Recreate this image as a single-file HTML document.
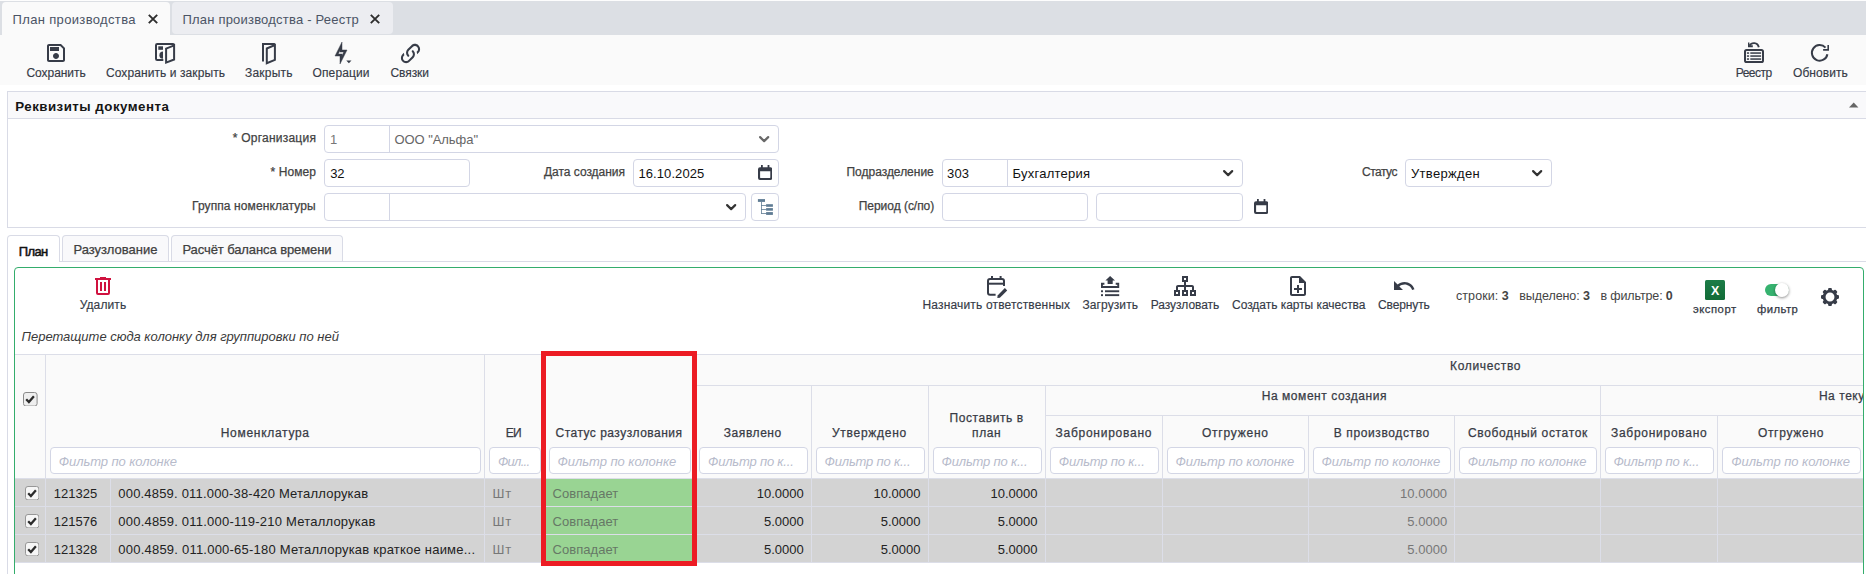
<!DOCTYPE html>
<html lang="ru"><head><meta charset="utf-8"><title>План производства</title><style>
html,body{margin:0;padding:0}
body{width:1866px;height:574px;overflow:hidden;background:#fff;position:relative;font-family:"Liberation Sans",sans-serif;font-size:13px;color:#333}
.b,.i,.t{position:absolute;box-sizing:border-box}
.t{white-space:pre;line-height:16px;display:block}
.tabbar{position:absolute;left:0;top:0;width:1866px;height:35px;background:#dcdfe4}
.toolbar{position:absolute;left:0;top:35px;width:1866px;height:50px;background:#fafafa}
.grid{overflow:hidden}
b{font-weight:700}
.sb{-webkit-text-stroke:.25px}
.sb2{-webkit-text-stroke:.5px}
.lb{-webkit-text-stroke:.15px}
</style></head><body>
<div class="tabbar">
<div class="b" style="left:0px;top:0px;width:1866px;height:1px;background:#fdfdfd"></div>
<div class="b" style="left:2px;top:2px;width:168px;height:33px;background:#fafafa;border-radius:4px 4px 0 0"></div>
<div class="b" style="left:172px;top:2px;width:221px;height:32px;background:#ecedf1;border-radius:4px"></div>
<span class="t" style="left:12.50px;top:11.50px;color:#4b5465;letter-spacing:0.350px;">План производства</span>
<svg class="i" style="left:147px;top:13.2px" width="12" height="12" viewBox="0 0 12 12" ><path d="M1.8 1.8L10.2 10.2M10.2 1.8L1.8 10.2" fill="none" stroke="#2e2e2e" stroke-width="1.9"/></svg>
<span class="t" style="left:182.40px;top:11.50px;color:#4b5465;letter-spacing:0.208px;">План производства - Реестр</span>
<svg class="i" style="left:369.4px;top:13.2px" width="12" height="12" viewBox="0 0 12 12" ><path d="M1.8 1.8L10.2 10.2M10.2 1.8L1.8 10.2" fill="none" stroke="#2e2e2e" stroke-width="1.9"/></svg>
</div>
<div class="toolbar">
<svg class="i" style="left:44px;top:6px" width="24" height="24" viewBox="0 0 24 24" ><path fill="#373c48" d="M17 3H5C3.89 3 3 3.9 3 5V19C3 20.1 3.89 21 5 21H19C20.1 21 21 20.1 21 19V7L17 3M19 19H5V5H16.17L19 7.83V19M12 12C10.34 12 9 13.34 9 15S10.34 18 12 18 15 16.66 15 15 13.66 12 12 12M6 6H15V10H6V6Z"/></svg>
<span class="t lb" style="left:26.50px;top:29.84px;font-size:12px;color:#363b47;letter-spacing:-0.055px;">Сохранить</span>
<svg class="i" style="left:155px;top:8px" width="21" height="22" viewBox="0 0 21 22" ><g fill="none" stroke="#373c48" stroke-width="2"><path d="M8.3 16.9H2.2A1.2 1.2 0 0 1 1 15.7V2.2A1.2 1.2 0 0 1 2.2 1H18A1.1 1.1 0 0 1 19.1 2.1"/><path d="M11.1 5.7L19.1 2.4V16.5L11.1 19.6Z" stroke-linejoin="miter"/></g><rect x="3.3" y="3.3" width="4.7" height="3.5" fill="#373c48"/><path d="M8 8.6A3.6 3.6 0 0 0 8 15.8Z" fill="#373c48"/></svg>
<span class="t lb" style="left:106.00px;top:29.84px;font-size:12px;color:#363b47;letter-spacing:0.084px;">Сохранить и закрыть</span>
<svg class="i" style="left:261px;top:7px" width="17" height="23" viewBox="0 0 17 23" ><g fill="none" stroke="#373c48" stroke-width="2"><path d="M2 19.4V2H13.9"/><path d="M5.8 6.5L13.9 3.1V17.9L5.8 21.2Z"/></g></svg>
<span class="t lb" style="left:245.00px;top:29.84px;font-size:12px;color:#363b47;letter-spacing:0.197px;">Закрыть</span>
<svg class="i" style="left:329px;top:6px" width="24" height="24" viewBox="0 0 24 24" ><path fill="#373c48" stroke="#373c48" stroke-width=".45" d="M11 9.47V11H14.76L13 14.53V13H9.24L11 9.47M13 1L6 15H11V23L18 9H13V1Z"/></svg>
<svg class="i" style="left:345.5px;top:24.8px" width="6" height="4" viewBox="0 0 6 4" ><path d="M.3 .4H5.5L2.9 3.2Z" fill="#373c48"/></svg>
<span class="t lb" style="left:312.60px;top:29.84px;font-size:12px;color:#363b47;letter-spacing:0.094px;">Операции</span>
<svg class="i" style="left:397.9px;top:5.9px" width="25" height="25" viewBox="0 0 24 24" ><path fill="#373c48" d="M10.59,13.41C11,13.8 11,14.44 10.59,14.83C10.2,15.22 9.56,15.22 9.17,14.83C7.22,12.88 7.22,9.71 9.17,7.76V7.76L12.71,4.22C14.66,2.27 17.83,2.27 19.78,4.22C21.73,6.17 21.73,9.34 19.78,11.29L18.29,12.78C18.3,11.96 18.17,11.14 17.89,10.36L18.36,9.88C19.54,8.71 19.54,6.81 18.36,5.64C17.19,4.46 15.29,4.46 14.12,5.64L10.59,9.17C9.41,10.34 9.41,12.24 10.59,13.41M13.41,9.17C13.8,8.78 14.44,8.78 14.83,9.17C16.78,11.12 16.78,14.29 14.83,16.24V16.24L11.29,19.78C9.34,21.73 6.17,21.73 4.22,19.78C2.27,17.83 2.27,14.66 4.22,12.71L5.71,11.22C5.7,12.04 5.83,12.86 6.11,13.65L5.64,14.12C4.46,15.29 4.46,17.19 5.64,18.36C6.81,19.54 8.71,19.54 9.88,18.36L13.41,14.83C14.59,13.66 14.59,11.76 13.41,10.59C13,10.2 13,9.56 13.41,9.17Z"/></svg>
<span class="t lb" style="left:390.50px;top:29.84px;font-size:12px;color:#363b47;letter-spacing:-0.072px;">Связки</span>
<svg class="i" style="left:1743px;top:6px" width="22" height="23" viewBox="0 0 22 23" ><rect x="2" y="9" width="18" height="12" rx="1.6" fill="none" stroke="#373c48" stroke-width="2"/><g fill="#373c48"><rect x="3.9" y="11.3" width="2.2" height="1.5"/><rect x="7.3" y="11.3" width="10.8" height="1.5"/><rect x="3.9" y="14.3" width="2.2" height="1.5"/><rect x="7.3" y="14.3" width="10.8" height="1.5"/><rect x="3.9" y="17.3" width="2.2" height="1.5"/><rect x="7.3" y="17.3" width="10.8" height="1.5"/><path d="M5 1.5H6.4V4.3H9.8V6.2H5Z"/></g><path d="M6.5 4.6C8.5 1.2 14.5 .9 15.8 6.2" fill="none" stroke="#373c48" stroke-width="1.9"/></svg>
<span class="t lb" style="left:1735.70px;top:29.84px;font-size:12px;color:#363b47;letter-spacing:-0.500px;">Реестр</span>
<svg class="i" style="left:1809px;top:7px" width="22" height="22" viewBox="0 0 22 22" ><path d="M16.5 5.68A7.8 7.8 0 1 0 18.38 12.25" fill="none" stroke="#373c48" stroke-width="2"/><path d="M18.4 3.1H20V8.7H14.1V6.9H18.4Z" fill="#373c48"/></svg>
<span class="t lb" style="left:1793.00px;top:29.84px;font-size:12px;color:#363b47;letter-spacing:0.065px;">Обновить</span>
</div>
<div class="b" style="left:7px;top:91px;width:1870px;height:137px;border:1px solid #d9dbe6;background:#fff"></div>
<div class="b" style="left:8px;top:92px;width:1868px;height:27px;background:#f9f9fb;border-bottom:1px solid #d9dbe6"></div>
<span class="t" style="left:15.30px;top:98.69px;font-size:13.3px;font-weight:700;color:#151515;letter-spacing:0.478px;">Реквизиты документа</span>
<svg class="i" style="left:1849px;top:101.5px" width="10" height="6" viewBox="0 0 10 6" ><path d="M0 5.5L4.7 .6L9.4 5.5Z" fill="#666"/></svg>
<span class="t sb" style="left:232.70px;top:130.14px;font-size:12px;color:#424242;letter-spacing:0.234px;">* Организация</span>
<div class="b" style="left:324px;top:125px;width:455px;height:28px;border:1px solid #d3d6e5;border-radius:4px;background:#fff;"></div>
<div class="b" style="left:389px;top:126px;width:1px;height:26px;background:#d3d6e5"></div>
<span class="t" style="left:330.00px;top:131.50px;color:#777;">1</span>
<span class="t" style="left:394.50px;top:131.50px;color:#666;letter-spacing:-0.064px;">ООО "Альфа"</span>
<svg class="i" style="left:758.3px;top:134.5px" width="12.5" height="8.5" viewBox="0 0 12.5 8.5" ><path d="M2.1 2.1 L6.15 6.1 L10.2 2.1" fill="none" stroke="#686868" stroke-width="2.2" stroke-linecap="round" stroke-linejoin="round"/></svg>
<span class="t sb" style="left:270.60px;top:164.04px;font-size:12px;color:#424242;letter-spacing:0.058px;">* Номер</span>
<div class="b" style="left:324px;top:159px;width:146px;height:28px;border:1px solid #d3d6e5;border-radius:4px;background:#fff;"></div>
<span class="t" style="left:330.20px;top:165.50px;color:#111;letter-spacing:-0.269px;">32</span>
<span class="t sb" style="left:544.00px;top:164.24px;font-size:12px;color:#424242;letter-spacing:-0.027px;">Дата создания</span>
<div class="b" style="left:633px;top:159px;width:146px;height:28px;border:1px solid #d3d6e5;border-radius:4px;background:#fff;"></div>
<span class="t" style="left:638.50px;top:165.50px;color:#111;letter-spacing:0.075px;">16.10.2025</span>
<svg class="i" style="left:757.9px;top:165.1px" width="14.4" height="15" viewBox="0 0 14.4 15" ><path fill="#373c48" d="M3 0h1.8v2.3h4.8V0h1.8v2.3h1A2 2 0 0 1 14.4 4.3V13a2 2 0 0 1-2 2H2a2 2 0 0 1-2-2V4.3a2 2 0 0 1 2-2h1zM2.1 6.2v6.3a.4.4 0 0 0 .4.4h9.4a.4.4 0 0 0 .4-.4V6.2z"/></svg>
<span class="t sb" style="left:192.00px;top:198.04px;font-size:12px;color:#424242;letter-spacing:0.099px;">Группа номенклатуры</span>
<div class="b" style="left:324px;top:193px;width:422px;height:28px;border:1px solid #d3d6e5;border-radius:4px;background:#fff;"></div>
<div class="b" style="left:389px;top:194px;width:1px;height:26px;background:#d3d6e5"></div>
<svg class="i" style="left:725px;top:203px" width="12.5" height="8.5" viewBox="0 0 12.5 8.5" ><path d="M2.1 2.1 L6.15 6.1 L10.2 2.1" fill="none" stroke="#333" stroke-width="2.2" stroke-linecap="round" stroke-linejoin="round"/></svg>
<div class="b" style="left:751px;top:193px;width:28px;height:28px;border:1px solid #d3d6e5;border-radius:4px;background:#fff;"></div>
<svg class="i" style="left:757px;top:198px" width="17" height="18" viewBox="0 0 17 18" ><g fill="#5f7c94"><rect x=".9" y="1.1" width="7.1" height="2.8"/><rect x="9.1" y="6.2" width="6.8" height="2.6"/><rect x="9.1" y="10.1" width="6.8" height="2.6"/><rect x="9.1" y="14.1" width="6.8" height="2.8"/><rect x="4" y="3.9" width=".8" height="11.8"/><rect x="4" y="7.1" width="5.2" height=".8"/><rect x="4" y="11" width="5.2" height=".8"/><rect x="4" y="15" width="5.2" height=".8"/></g></svg>
<span class="t sb" style="left:846.50px;top:164.24px;font-size:12px;color:#424242;letter-spacing:-0.017px;">Подразделение</span>
<div class="b" style="left:942px;top:159px;width:301px;height:28px;border:1px solid #d3d6e5;border-radius:4px;background:#fff;"></div>
<div class="b" style="left:1007px;top:160px;width:1px;height:26px;background:#d3d6e5"></div>
<span class="t" style="left:947.00px;top:165.50px;color:#111;letter-spacing:0.148px;">303</span>
<span class="t" style="left:1012.50px;top:165.50px;color:#111;letter-spacing:0.241px;">Бухгалтерия</span>
<svg class="i" style="left:1222.25px;top:169px" width="12.5" height="8.5" viewBox="0 0 12.5 8.5" ><path d="M2.1 2.1 L6.15 6.1 L10.2 2.1" fill="none" stroke="#333" stroke-width="2.2" stroke-linecap="round" stroke-linejoin="round"/></svg>
<span class="t sb" style="left:858.75px;top:198.14px;font-size:12px;color:#424242;letter-spacing:-0.035px;">Период (с/по)</span>
<div class="b" style="left:942px;top:193px;width:146px;height:28px;border:1px solid #d3d6e5;border-radius:4px;background:#fff;"></div>
<div class="b" style="left:1096px;top:193px;width:147px;height:28px;border:1px solid #d3d6e5;border-radius:4px;background:#fff;"></div>
<svg class="i" style="left:1253.8px;top:199.3px" width="14.4" height="15" viewBox="0 0 14.4 15" ><path fill="#373c48" d="M3 0h1.8v2.3h4.8V0h1.8v2.3h1A2 2 0 0 1 14.4 4.3V13a2 2 0 0 1-2 2H2a2 2 0 0 1-2-2V4.3a2 2 0 0 1 2-2h1zM2.1 6.2v6.3a.4.4 0 0 0 .4.4h9.4a.4.4 0 0 0 .4-.4V6.2z"/></svg>
<span class="t sb" style="left:1362.00px;top:164.24px;font-size:12px;color:#424242;letter-spacing:-0.487px;">Статус</span>
<div class="b" style="left:1405px;top:159px;width:147px;height:28px;border:1px solid #d3d6e5;border-radius:4px;background:#fff;"></div>
<span class="t" style="left:1411.00px;top:165.50px;color:#111;letter-spacing:0.328px;">Утвержден</span>
<svg class="i" style="left:1530.75px;top:169px" width="12.5" height="8.5" viewBox="0 0 12.5 8.5" ><path d="M2.1 2.1 L6.15 6.1 L10.2 2.1" fill="none" stroke="#333" stroke-width="2.2" stroke-linecap="round" stroke-linejoin="round"/></svg>
<div class="b" style="left:7px;top:261px;width:1870px;height:1px;background:#d9dbe6"></div>
<div class="b" style="left:7px;top:262px;width:1px;height:320px;background:#d9dbe6"></div>
<div class="b" style="left:7px;top:235px;width:53px;height:27px;border:1px solid #d9dbe6;border-bottom:0;border-radius:4px 4px 0 0;background:#fff"></div>
<div class="b" style="left:62px;top:235px;width:107px;height:26px;border:1px solid #d9dbe6;border-bottom:0;border-radius:4px 4px 0 0;background:#f9f9fb"></div>
<div class="b" style="left:171px;top:235px;width:172px;height:26px;border:1px solid #d9dbe6;border-bottom:0;border-radius:4px 4px 0 0;background:#f9f9fb"></div>
<span class="t sb2" style="left:18.80px;top:243.50px;color:#111;letter-spacing:-0.615px;">План</span>
<span class="t sb" style="left:73.40px;top:242.10px;color:#404040;">Разузлование</span>
<span class="t sb" style="left:182.40px;top:242.10px;color:#404040;letter-spacing:-0.090px;">Расчёт баланса времени</span>
<div class="b" style="left:14px;top:267px;width:1850px;height:330px;border:1px solid #34ad6c;border-radius:4px;background:#fff"></div>
<svg class="i" style="left:90.7px;top:274.2px" width="24" height="24" viewBox="0 0 24 24" ><path fill="#d0123f" d="M9,3V4H4V6H5V19A2,2 0 0,0 7,21H17A2,2 0 0,0 19,19V6H20V4H15V3H9M7,6H17V19H7V6M9,8V17H11V8H9M13,8V17H15V8H13Z"/></svg>
<span class="t lb" style="left:79.70px;top:296.84px;font-size:12px;color:#363b47;letter-spacing:0.112px;">Удалить</span>
<svg class="i" style="left:986px;top:275px" width="23" height="23" viewBox="0 0 23 23" ><g fill="none" stroke="#373c48" stroke-width="2"><path d="M9.6 19.7H4A2 2 0 0 1 2 17.7V6A2 2 0 0 1 4 4H16A2 2 0 0 1 18 6V11"/><path d="M2 8.7H18"/><path d="M6 1V4M14.6 1V4"/></g><path d="M11.6 20.4L18.9 13.1L21.2 15.4L13.9 22.7L11.3 23Z" fill="#373c48"/></svg>
<span class="t lb" style="left:922.50px;top:296.84px;font-size:12px;color:#363b47;letter-spacing:0.165px;">Назначить ответственных</span>
<svg class="i" style="left:1101px;top:276px" width="19" height="21" viewBox="0 0 19 21" ><g fill="#373c48"><path d="M9.1 0L14 4.4H11.7V7.9H6.6V4.4H4.4Z"/><path d="M0 6.8H3.4V8.7H1.9V10H16.3V8.7H14.7V6.8H18.2V11.9H0Z"/><rect x="0" y="14.3" width="2" height="1.9"/><rect x="4" y="14.3" width="14.2" height="1.9"/><rect x="0" y="18.2" width="2" height="1.9"/><rect x="4" y="18.2" width="14.2" height="1.9"/></g></svg>
<span class="t lb" style="left:1082.50px;top:296.84px;font-size:12px;color:#363b47;letter-spacing:0.088px;">Загрузить</span>
<svg class="i" style="left:1173px;top:274px" width="24" height="24" viewBox="0 0 24 24" ><path fill="#373c48" d="M9 2V8H11V11H5C3.89 11 3 11.89 3 13V16H1V22H7V16H5V13H11V16H9V22H15V16H13V13H19V16H17V22H23V16H21V13C21 11.89 20.11 11 19 11H13V8H15V2H9M11 4H13V6H11V4M3 18H5V20H3V18M11 18H13V20H11V18M19 18H21V20H19V18Z"/></svg>
<span class="t lb" style="left:1150.75px;top:296.84px;font-size:12px;color:#363b47;letter-spacing:-0.059px;">Разузловать</span>
<svg class="i" style="left:1286px;top:274px" width="24" height="24" viewBox="0 0 24 24" ><path fill="#373c48" d="M14 2H6C4.89 2 4 2.89 4 4V20C4 21.11 4.89 22 6 22H18C19.11 22 20 21.11 20 20V8L14 2M18 20H6V4H13V9H18V20M13 11V14H16V16H13V19H11V16H8V14H11V11H13ZM13 3.5V9H18.5Z"/></svg>
<span class="t lb" style="left:1232.00px;top:296.84px;font-size:12px;color:#363b47;letter-spacing:-0.036px;">Создать карты качества</span>
<svg class="i" style="left:1391.5px;top:274.2px" width="24" height="24" viewBox="0 0 24 24" ><path fill="#373c48" d="M12.5,8C9.85,8 7.45,9 5.6,10.6L2,7V16H11L7.38,12.38C8.77,11.22 10.54,10.5 12.5,10.5C16.04,10.5 19.05,12.81 20.1,16L22.47,15.22C21.08,11.03 17.15,8 12.5,8Z"/></svg>
<span class="t lb" style="left:1378.00px;top:296.84px;font-size:12px;color:#363b47;letter-spacing:-0.120px;">Свернуть</span>
<span class="t" style="left:1456.00px;top:287.67px;font-size:12.5px;color:#444;letter-spacing:0.071px;">строки: <b>3</b></span>
<span class="t" style="left:1519.30px;top:287.67px;font-size:12.5px;color:#444;letter-spacing:-0.077px;">выделено: <b>3</b></span>
<span class="t" style="left:1600.50px;top:287.67px;font-size:12.5px;color:#444;letter-spacing:-0.132px;">в фильтре: <b>0</b></span>
<div class="b" style="left:1705px;top:280px;width:20px;height:20px;background:linear-gradient(#1c7c47,#126c37);border-radius:1.5px"></div>
<span class="t" style="left:1711.00px;top:282.67px;font-size:12.5px;font-weight:700;color:#fff;letter-spacing:-0.544px;">X</span>
<span class="t sb" style="left:1693.00px;top:301.08px;font-size:11.3px;color:#333844;letter-spacing:0.501px;">экспорт</span>
<div class="b" style="left:1765px;top:284px;width:24px;height:12px;background:linear-gradient(90deg,#36b26f 45%,#9cc9b0);border-radius:6px"></div>
<div class="b" style="left:1775px;top:283px;width:14px;height:14px;background:#fff;border-radius:50%;box-shadow:0 1px 3px rgba(0,0,0,.45)"></div>
<span class="t sb" style="left:1756.90px;top:301.08px;font-size:11.3px;color:#333844;letter-spacing:0.466px;">фильтр</span>
<svg class="i" style="left:1820px;top:286.9px" width="20" height="20" viewBox="0 0 20 20" ><g transform="translate(10 10)" fill="#373c48"><circle r="5.9" fill="none" stroke="#373c48" stroke-width="2.9"/><rect x="-1.9" y="-9" width="3.8" height="4" rx="1.1" transform="rotate(0)"/><rect x="-1.9" y="-9" width="3.8" height="4" rx="1.1" transform="rotate(45)"/><rect x="-1.9" y="-9" width="3.8" height="4" rx="1.1" transform="rotate(90)"/><rect x="-1.9" y="-9" width="3.8" height="4" rx="1.1" transform="rotate(135)"/><rect x="-1.9" y="-9" width="3.8" height="4" rx="1.1" transform="rotate(180)"/><rect x="-1.9" y="-9" width="3.8" height="4" rx="1.1" transform="rotate(225)"/><rect x="-1.9" y="-9" width="3.8" height="4" rx="1.1" transform="rotate(270)"/><rect x="-1.9" y="-9" width="3.8" height="4" rx="1.1" transform="rotate(315)"/></g></svg>
<span class="t" style="left:21.60px;top:328.50px;font-style:italic;color:#3a3a3a;letter-spacing:-0.024px;">Перетащите сюда колонку для группировки по ней</span>
<div class="grid b" style="left:15px;top:354px;width:1848px;height:240px">
<div class="b" style="left:0px;top:0px;width:1848px;height:125px;background:#fafafa;border-bottom:1px solid #dcdee8"></div>
<div class="b" style="left:0px;top:0px;width:1848px;height:1px;background:#dcdee8"></div>
<div class="b" style="left:680px;top:31px;width:1200px;height:1px;background:#dcdee8"></div>
<div class="b" style="left:1031px;top:61px;width:900px;height:1px;background:#dcdee8"></div>
<div class="b" style="left:30px;top:1px;width:1px;height:123px;background:#dcdee8"></div>
<div class="b" style="left:469px;top:1px;width:1px;height:123px;background:#dcdee8"></div>
<div class="b" style="left:529px;top:1px;width:1px;height:123px;background:#dcdee8"></div>
<div class="b" style="left:679px;top:1px;width:1px;height:123px;background:#dcdee8"></div>
<div class="b" style="left:796px;top:32px;width:1px;height:92px;background:#dcdee8"></div>
<div class="b" style="left:913px;top:32px;width:1px;height:92px;background:#dcdee8"></div>
<div class="b" style="left:1030px;top:32px;width:1px;height:92px;background:#dcdee8"></div>
<div class="b" style="left:1147px;top:62px;width:1px;height:62px;background:#dcdee8"></div>
<div class="b" style="left:1293px;top:62px;width:1px;height:62px;background:#dcdee8"></div>
<div class="b" style="left:1439px;top:62px;width:1px;height:62px;background:#dcdee8"></div>
<div class="b" style="left:1585px;top:32px;width:1px;height:92px;background:#dcdee8"></div>
<div class="b" style="left:1702px;top:62px;width:1px;height:62px;background:#dcdee8"></div>
<svg class="i" style="left:8.2px;top:37.8px" width="14.6" height="14.6" viewBox="0 0 14.6 14.6" ><rect x=".5" y=".5" width="13.6" height="13.6" rx="2.5" fill="#efefef" stroke="#8a8a8a"/><path d="M3.2 7.3 L5.9 10 L10.9 4.3" fill="none" stroke="#2b2b2b" stroke-width="2.3"/></svg>
<span class="t sb" style="left:205.75px;top:70.84px;font-size:12px;color:#383b45;letter-spacing:0.702px;">Номенклатура</span>
<span class="t sb" style="left:490.75px;top:70.84px;font-size:12px;color:#383b45;letter-spacing:-0.641px;">ЕИ</span>
<span class="t sb" style="left:540.50px;top:70.84px;font-size:12px;color:#383b45;letter-spacing:0.484px;">Статус разузлования</span>
<span class="t sb" style="left:708.75px;top:70.84px;font-size:12px;color:#383b45;letter-spacing:0.571px;">Заявлено</span>
<span class="t sb" style="left:817.00px;top:70.84px;font-size:12px;color:#383b45;letter-spacing:0.726px;">Утверждено</span>
<span class="t sb" style="left:934.50px;top:56.34px;font-size:12px;color:#383b45;letter-spacing:0.588px;">Поставить в</span>
<span class="t sb" style="left:957.00px;top:70.84px;font-size:12px;color:#383b45;letter-spacing:0.646px;">план</span>
<span class="t sb" style="left:1040.50px;top:70.84px;font-size:12px;color:#383b45;letter-spacing:0.746px;">Забронировано</span>
<span class="t sb" style="left:1187.00px;top:70.84px;font-size:12px;color:#383b45;letter-spacing:0.764px;">Отгружено</span>
<span class="t sb" style="left:1318.75px;top:70.84px;font-size:12px;color:#383b45;letter-spacing:0.619px;">В производство</span>
<span class="t sb" style="left:1453.00px;top:70.84px;font-size:12px;color:#383b45;letter-spacing:0.647px;">Свободный остаток</span>
<span class="t sb" style="left:1595.90px;top:70.84px;font-size:12px;color:#383b45;letter-spacing:0.738px;">Забронировано</span>
<span class="t sb" style="left:1742.90px;top:70.84px;font-size:12px;color:#383b45;letter-spacing:0.701px;">Отгружено</span>
<span class="t sb" style="left:1435.00px;top:3.84px;font-size:12px;color:#383b45;letter-spacing:0.672px;">Количество</span>
<span class="t sb" style="left:1246.75px;top:33.84px;font-size:12px;color:#383b45;letter-spacing:0.550px;">На момент создания</span>
<span class="t sb" style="left:1803.90px;top:33.84px;font-size:12px;color:#383b45;letter-spacing:0.550px;">На текущий момент</span>
<div class="b" style="left:35px;top:93px;width:431px;height:27px;border:1px solid #d3d6e5;border-radius:4px;background:#fff;"></div><span class="t" style="left:43.75px;top:99.50px;font-style:italic;color:#b7bbcb;letter-spacing:-0.073px;">Фильтр по колонке</span>
<div class="b" style="left:474px;top:93px;width:52px;height:27px;border:1px solid #d3d6e5;border-radius:4px;background:#fff;"></div><span class="t" style="left:483.00px;top:99.50px;font-style:italic;color:#b7bbcb;letter-spacing:-0.747px;">Фил...</span>
<div class="b" style="left:534px;top:93px;width:142px;height:27px;border:1px solid #d3d6e5;border-radius:4px;background:#fff;"></div><span class="t" style="left:542.50px;top:99.50px;font-style:italic;color:#b7bbcb;letter-spacing:-0.042px;">Фильтр по колонке</span>
<div class="b" style="left:684px;top:93px;width:109px;height:27px;border:1px solid #d3d6e5;border-radius:4px;background:#fff;"></div><span class="t" style="left:693.00px;top:99.50px;font-style:italic;color:#b7bbcb;letter-spacing:-0.191px;">Фильтр по к...</span>
<div class="b" style="left:801px;top:93px;width:109px;height:27px;border:1px solid #d3d6e5;border-radius:4px;background:#fff;"></div><span class="t" style="left:809.50px;top:99.50px;font-style:italic;color:#b7bbcb;letter-spacing:-0.172px;">Фильтр по к...</span>
<div class="b" style="left:918px;top:93px;width:109px;height:27px;border:1px solid #d3d6e5;border-radius:4px;background:#fff;"></div><span class="t" style="left:926.50px;top:99.50px;font-style:italic;color:#b7bbcb;letter-spacing:-0.172px;">Фильтр по к...</span>
<div class="b" style="left:1035px;top:93px;width:109px;height:27px;border:1px solid #d3d6e5;border-radius:4px;background:#fff;"></div><span class="t" style="left:1043.75px;top:99.50px;font-style:italic;color:#b7bbcb;letter-spacing:-0.172px;">Фильтр по к...</span>
<div class="b" style="left:1152px;top:93px;width:138px;height:27px;border:1px solid #d3d6e5;border-radius:4px;background:#fff;"></div><span class="t" style="left:1160.50px;top:99.50px;font-style:italic;color:#b7bbcb;letter-spacing:-0.042px;">Фильтр по колонке</span>
<div class="b" style="left:1298px;top:93px;width:138px;height:27px;border:1px solid #d3d6e5;border-radius:4px;background:#fff;"></div><span class="t" style="left:1306.50px;top:99.50px;font-style:italic;color:#b7bbcb;letter-spacing:-0.042px;">Фильтр по колонке</span>
<div class="b" style="left:1444px;top:93px;width:138px;height:27px;border:1px solid #d3d6e5;border-radius:4px;background:#fff;"></div><span class="t" style="left:1452.75px;top:99.50px;font-style:italic;color:#b7bbcb;letter-spacing:-0.042px;">Фильтр по колонке</span>
<div class="b" style="left:1590px;top:93px;width:109px;height:27px;border:1px solid #d3d6e5;border-radius:4px;background:#fff;"></div><span class="t" style="left:1598.40px;top:99.50px;font-style:italic;color:#b7bbcb;letter-spacing:-0.172px;">Фильтр по к...</span>
<div class="b" style="left:1707px;top:93px;width:139px;height:27px;border:1px solid #d3d6e5;border-radius:4px;background:#fff;"></div><span class="t" style="left:1716.20px;top:99.50px;font-style:italic;color:#b7bbcb;letter-spacing:-0.039px;">Фильтр по колонке</span>
<div class="b row" style="left:0px;top:125px;width:1848px;height:28px;background:#d3d3d3;border-bottom:1px solid #dcdee8"></div>
<div class="b" style="left:529px;top:125px;width:151px;height:27px;background:#99d493"></div>
<div class="b" style="left:30px;top:125px;width:1px;height:27px;background:#dcdee8"></div>
<div class="b" style="left:95px;top:125px;width:1px;height:27px;background:#dcdee8"></div>
<div class="b" style="left:469px;top:125px;width:1px;height:27px;background:#dcdee8"></div>
<div class="b" style="left:529px;top:125px;width:1px;height:27px;background:#dcdee8"></div>
<div class="b" style="left:679px;top:125px;width:1px;height:27px;background:#dcdee8"></div>
<div class="b" style="left:796px;top:125px;width:1px;height:27px;background:#dcdee8"></div>
<div class="b" style="left:913px;top:125px;width:1px;height:27px;background:#dcdee8"></div>
<div class="b" style="left:1030px;top:125px;width:1px;height:27px;background:#dcdee8"></div>
<div class="b" style="left:1147px;top:125px;width:1px;height:27px;background:#dcdee8"></div>
<div class="b" style="left:1293px;top:125px;width:1px;height:27px;background:#dcdee8"></div>
<div class="b" style="left:1439px;top:125px;width:1px;height:27px;background:#dcdee8"></div>
<div class="b" style="left:1585px;top:125px;width:1px;height:27px;background:#dcdee8"></div>
<div class="b" style="left:1702px;top:125px;width:1px;height:27px;background:#dcdee8"></div>
<svg class="i" style="left:9.5px;top:131.6px" width="14.4" height="14.4" viewBox="0 0 14.4 14.4" ><rect x=".5" y=".5" width="13.4" height="13.4" rx="2.5" fill="#f6f6f6" stroke="#969696"/><path d="M3.2 7.3 L5.9 10 L10.9 4.3" fill="none" stroke="#2b2b2b" stroke-width="2.3"/></svg>
<span class="t" style="left:38.70px;top:131.50px;color:#222;letter-spacing:0.042px;">121325</span>
<span class="t" style="left:103.30px;top:131.50px;color:#222;letter-spacing:0.190px;">000.4859. 011.000-38-420 Металлорукав</span>
<span class="t" style="left:477.50px;top:131.50px;color:#777;letter-spacing:0.875px;">Шт</span>
<span class="t" style="left:537.50px;top:131.50px;color:#667866;letter-spacing:0.047px;">Совпадает</span>
<span class="t" style="left:741.75px;top:131.50px;color:#222;">10.0000</span>
<span class="t" style="left:858.50px;top:131.50px;color:#222;">10.0000</span>
<span class="t" style="left:975.50px;top:131.50px;color:#222;">10.0000</span>
<span class="t" style="left:1385.10px;top:131.50px;color:#777;">10.0000</span>
<div class="b row" style="left:0px;top:153px;width:1848px;height:28px;background:#d3d3d3;border-bottom:1px solid #dcdee8"></div>
<div class="b" style="left:529px;top:153px;width:151px;height:27px;background:#99d493"></div>
<div class="b" style="left:30px;top:153px;width:1px;height:27px;background:#dcdee8"></div>
<div class="b" style="left:95px;top:153px;width:1px;height:27px;background:#dcdee8"></div>
<div class="b" style="left:469px;top:153px;width:1px;height:27px;background:#dcdee8"></div>
<div class="b" style="left:529px;top:153px;width:1px;height:27px;background:#dcdee8"></div>
<div class="b" style="left:679px;top:153px;width:1px;height:27px;background:#dcdee8"></div>
<div class="b" style="left:796px;top:153px;width:1px;height:27px;background:#dcdee8"></div>
<div class="b" style="left:913px;top:153px;width:1px;height:27px;background:#dcdee8"></div>
<div class="b" style="left:1030px;top:153px;width:1px;height:27px;background:#dcdee8"></div>
<div class="b" style="left:1147px;top:153px;width:1px;height:27px;background:#dcdee8"></div>
<div class="b" style="left:1293px;top:153px;width:1px;height:27px;background:#dcdee8"></div>
<div class="b" style="left:1439px;top:153px;width:1px;height:27px;background:#dcdee8"></div>
<div class="b" style="left:1585px;top:153px;width:1px;height:27px;background:#dcdee8"></div>
<div class="b" style="left:1702px;top:153px;width:1px;height:27px;background:#dcdee8"></div>
<svg class="i" style="left:9.5px;top:159.6px" width="14.4" height="14.4" viewBox="0 0 14.4 14.4" ><rect x=".5" y=".5" width="13.4" height="13.4" rx="2.5" fill="#f6f6f6" stroke="#969696"/><path d="M3.2 7.3 L5.9 10 L10.9 4.3" fill="none" stroke="#2b2b2b" stroke-width="2.3"/></svg>
<span class="t" style="left:38.70px;top:159.50px;color:#222;letter-spacing:0.042px;">121576</span>
<span class="t" style="left:103.30px;top:159.50px;color:#222;letter-spacing:0.213px;">000.4859. 011.000-119-210 Металлорукав</span>
<span class="t" style="left:477.50px;top:159.50px;color:#777;letter-spacing:0.875px;">Шт</span>
<span class="t" style="left:537.50px;top:159.50px;color:#667866;letter-spacing:0.047px;">Совпадает</span>
<span class="t" style="left:749.00px;top:159.50px;color:#222;">5.0000</span>
<span class="t" style="left:865.75px;top:159.50px;color:#222;">5.0000</span>
<span class="t" style="left:982.75px;top:159.50px;color:#222;">5.0000</span>
<span class="t" style="left:1392.35px;top:159.50px;color:#777;">5.0000</span>
<div class="b row" style="left:0px;top:181px;width:1848px;height:28px;background:#d3d3d3;border-bottom:1px solid #dcdee8"></div>
<div class="b" style="left:529px;top:181px;width:151px;height:27px;background:#99d493"></div>
<div class="b" style="left:30px;top:181px;width:1px;height:27px;background:#dcdee8"></div>
<div class="b" style="left:95px;top:181px;width:1px;height:27px;background:#dcdee8"></div>
<div class="b" style="left:469px;top:181px;width:1px;height:27px;background:#dcdee8"></div>
<div class="b" style="left:529px;top:181px;width:1px;height:27px;background:#dcdee8"></div>
<div class="b" style="left:679px;top:181px;width:1px;height:27px;background:#dcdee8"></div>
<div class="b" style="left:796px;top:181px;width:1px;height:27px;background:#dcdee8"></div>
<div class="b" style="left:913px;top:181px;width:1px;height:27px;background:#dcdee8"></div>
<div class="b" style="left:1030px;top:181px;width:1px;height:27px;background:#dcdee8"></div>
<div class="b" style="left:1147px;top:181px;width:1px;height:27px;background:#dcdee8"></div>
<div class="b" style="left:1293px;top:181px;width:1px;height:27px;background:#dcdee8"></div>
<div class="b" style="left:1439px;top:181px;width:1px;height:27px;background:#dcdee8"></div>
<div class="b" style="left:1585px;top:181px;width:1px;height:27px;background:#dcdee8"></div>
<div class="b" style="left:1702px;top:181px;width:1px;height:27px;background:#dcdee8"></div>
<svg class="i" style="left:9.5px;top:187.6px" width="14.4" height="14.4" viewBox="0 0 14.4 14.4" ><rect x=".5" y=".5" width="13.4" height="13.4" rx="2.5" fill="#f6f6f6" stroke="#969696"/><path d="M3.2 7.3 L5.9 10 L10.9 4.3" fill="none" stroke="#2b2b2b" stroke-width="2.3"/></svg>
<span class="t" style="left:38.70px;top:187.50px;color:#222;letter-spacing:0.042px;">121328</span>
<span class="t" style="left:103.30px;top:187.50px;color:#222;letter-spacing:0.222px;">000.4859. 011.000-65-180 Металлорукав краткое наиме...</span>
<span class="t" style="left:477.50px;top:187.50px;color:#777;letter-spacing:0.875px;">Шт</span>
<span class="t" style="left:537.50px;top:187.50px;color:#667866;letter-spacing:0.047px;">Совпадает</span>
<span class="t" style="left:749.00px;top:187.50px;color:#222;">5.0000</span>
<span class="t" style="left:865.75px;top:187.50px;color:#222;">5.0000</span>
<span class="t" style="left:982.75px;top:187.50px;color:#222;">5.0000</span>
<span class="t" style="left:1392.35px;top:187.50px;color:#777;">5.0000</span>
</div>
<div class="b" style="left:541px;top:351px;width:156px;height:215px;border:5px solid #ec1c24;box-sizing:border-box"></div>
</body></html>
